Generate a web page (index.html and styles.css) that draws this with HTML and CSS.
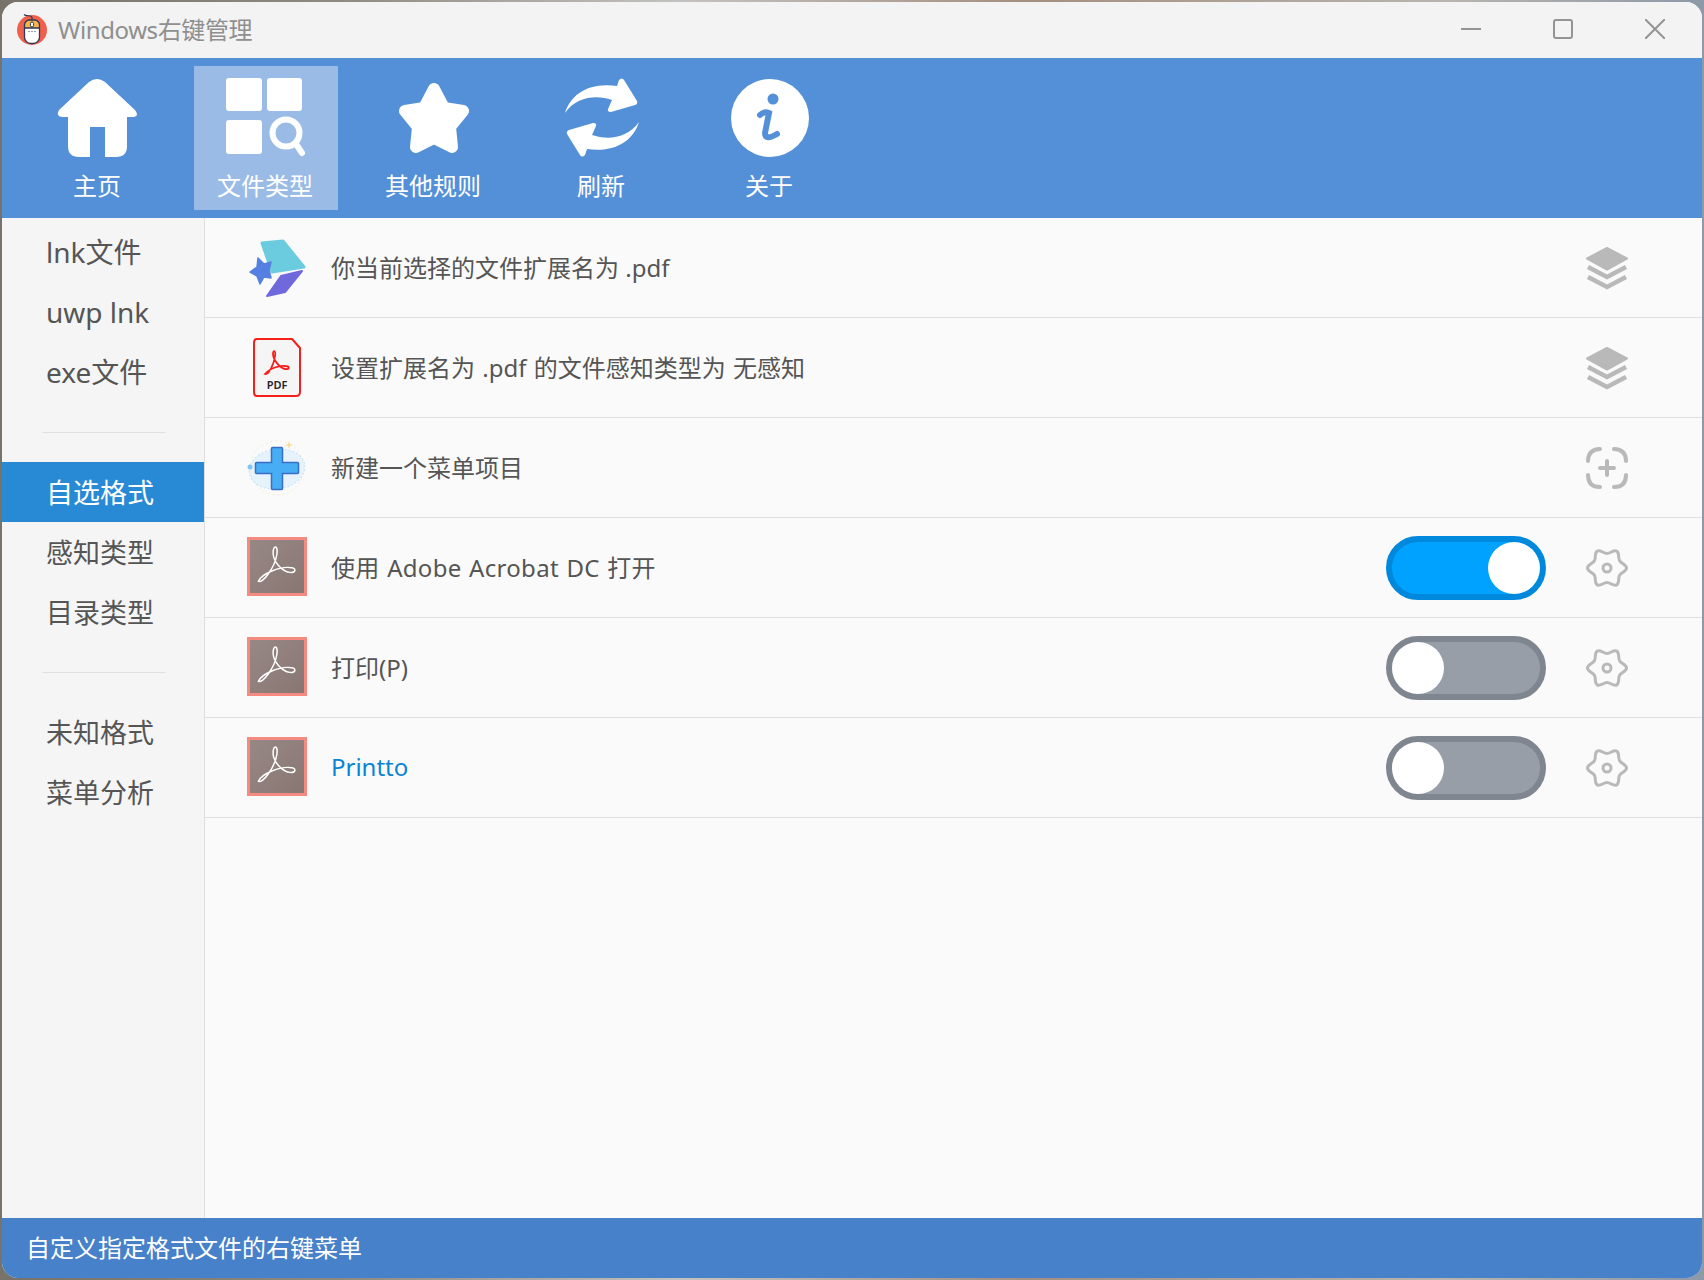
FILE: index.html
```html
<!DOCTYPE html>
<html lang="zh-CN">
<head>
  <meta charset="UTF-8">
  <meta name="viewport" content="width=device-width, initial-scale=1.0">
  <title>Windows右键管理</title>
  <link rel="stylesheet" href="styles.css">
</head>
<body>
  <!-- shared icons -->
  <svg class="sprite" aria-hidden="true">
    <symbol id="swirl" viewBox="0 0 54 54">
      <path d="M8 42C12 45 25 28 27 14C28 5 23 5 23 13C23 22 32 32 40 33C47 34 47 28 40 28C30 27 12 34 8 42Z"/>
    </symbol>
    <symbol id="layers" viewBox="0 0 44 44">
      <path class="solid" d="M22 2L42 12.500L22 23.500L2 12.500Z"/>
      <path class="chevrons" d="M3 21L22 31L41 21M3 31L22 41L41 31"/>
    </symbol>
    <symbol id="gear" viewBox="0 0 44 44">
      <path d="M22 7.500C25.500 7.500 28.720 3.360 31.750 5.110C34.780 6.860 32.810 11.720 34.560 14.750C36.310 17.780 41.500 18.500 41.500 22C41.500 25.500 36.310 26.220 34.560 29.250C32.810 32.280 34.780 37.140 31.750 38.890C28.720 40.640 25.500 36.500 22 36.500C18.500 36.500 15.280 40.640 12.250 38.890C9.220 37.140 11.190 32.280 9.440 29.250C7.690 26.220 2.500 25.500 2.500 22C2.500 18.500 7.690 17.780 9.440 14.750C11.190 11.720 9.220 6.860 12.250 5.110C15.280 3.360 18.500 7.500 22 7.500Z"/>
      <circle cx="22" cy="22" r="4"/>
    </symbol>
  </svg>

  <div class="window">
    <div class="titlebar">
      <svg class="app-icon" viewBox="0 0 32 32">
        <circle cx="16" cy="17" r="15" fill="#f0604d"/>
        <path d="M16 7V4.500C16 2 10 3.500 8 1.500" fill="none" stroke="#2b3a55" stroke-width="1.200"/>
        <path d="M8.500 15V12A5 5 0 0 1 13.500 7H18.500A5 5 0 0 1 23.500 12V15Z" fill="#f6b44a"/>
        <path d="M8.500 15H23.500V24A6.500 6.500 0 0 1 17 30.500H15A6.500 6.500 0 0 1 8.500 24Z" fill="#fff"/>
        <path d="M8.500 12A5 5 0 0 1 13.500 7H18.500A5 5 0 0 1 23.500 12V24A6.500 6.500 0 0 1 17 30.500H15A6.500 6.500 0 0 1 8.500 24ZM8.500 15H23.500" fill="none" stroke="#2b3a55" stroke-width="1.300"/>
        <rect x="14.500" y="9" width="3" height="5" rx="1.500" fill="#fff" stroke="#2b3a55"/>
        <path d="M12.500 18.500H13.500M15.500 18.500H16.500M18.500 18.500H19.500" stroke="#2b3a55"/>
      </svg>
      <div class="app-name">Windows右键管理</div>
      <div class="win-controls">
        <svg viewBox="0 0 20 20"><path d="M0 10H20"/></svg>
        <svg viewBox="0 0 20 20"><rect x="1" y="1" width="18" height="18" rx="2"/></svg>
        <svg viewBox="0 0 20 20"><path d="M0 0L20 20M20 0L0 20"/></svg>
      </div>
    </div>

    <div class="toolbar">
      <div class="tool">
        <svg viewBox="0 0 80 80"><path d="M32 4Q40 -2 48 4L78 32Q83 39 75 39H70V68Q70 79 59 79H48V49H33V79H22Q11 79 11 68V39H6Q-2 39 2 32Z"/></svg>
        <span>主页</span>
      </div>
      <div class="tool active">
        <svg viewBox="0 0 80 80">
          <rect x="1" y="0" width="36" height="33" rx="3"/>
          <rect x="42" y="0" width="35" height="33" rx="3"/>
          <rect x="1" y="42" width="36" height="34" rx="3"/>
          <circle class="lens" cx="61" cy="55" r="13.500"/>
          <path class="lens" d="M71 66L77 75"/>
        </svg>
        <span>文件类型</span>
      </div>
      <div class="tool">
        <svg viewBox="0 0 80 80"><polygon class="star" points="41,11 51,30 70,33 57,49 59,69 41,60 23,69 25,49 12,33 31,30"/></svg>
        <span>其他规则</span>
      </div>
      <div class="tool">
        <svg viewBox="0 0 80 80">
          <path d="M4 35C10 16 28 4 56 8L58 2Q61 -1 63 2L76 23Q77 26 74 27L50 34Q46 34 47 31L51 22C36 17 16 18 4 35Z"/>
          <path transform="rotate(180 41 39.500)" d="M4 35C10 16 28 4 56 8L58 2Q61 -1 63 2L76 23Q77 26 74 27L50 34Q46 34 47 31L51 22C36 17 16 18 4 35Z"/>
        </svg>
        <span>刷新</span>
      </div>
      <div class="tool">
        <svg viewBox="0 0 80 80">
          <circle cx="41" cy="40" r="39"/>
          <circle class="info-dot" cx="44" cy="21" r="5.500"/>
          <path class="info-stem" d="M31 37Q35 33 40 35L36 55Q36 63 48 56"/>
        </svg>
        <span>关于</span>
      </div>
    </div>

    <div class="content">
      <div class="sidebar">
        <div class="side-item">lnk文件</div>
        <div class="side-item">uwp lnk</div>
        <div class="side-item">exe文件</div>
        <div class="side-divider"></div>
        <div class="side-item zh selected">自选格式</div>
        <div class="side-item zh">感知类型</div>
        <div class="side-item zh">目录类型</div>
        <div class="side-divider"></div>
        <div class="side-item zh">未知格式</div>
        <div class="side-item zh">菜单分析</div>
      </div>

      <div class="list">
        <div class="row">
          <svg class="row-icon" viewBox="0 0 60 60">
            <polygon points="15,5 36,3 57,29 25,34" fill="#6bcbdf" stroke="#6bcbdf" stroke-width="3" stroke-linejoin="round"/>
            <polygon points="55,33 38,54 20,58 34,38" fill="#7069dc" stroke="#7069dc" stroke-width="2" stroke-linejoin="round"/>
            <polygon points="11,20 17,26 24,24 22,32 24,40 17,39 13,46 10,38 3,34 10,29" fill="#5580e2" stroke="#5580e2" stroke-width="1.500" stroke-linejoin="round"/>
          </svg>
          <div class="row-text">你当前选择的文件扩展名为 .pdf</div>
          <svg class="row-action"><use href="#layers"/></svg>
        </div>

        <div class="row">
          <svg class="row-icon" viewBox="0 0 60 60">
            <path class="pdf-page" d="M10 1H45L53 10V54Q53 58 49 58H10Q7 58 7 54V5Q7 1 10 1Z"/>
            <path class="pdf-swirl" d="M18 36C22 37 27 26 28 18C29 12 26 12 26 16C26 22 33 30 38 31C43 32 43 28 38 28C32 27 22 31 18 36Z"/>
            <text class="pdf-label" x="30" y="51" text-anchor="middle">PDF</text>
          </svg>
          <div class="row-text spaced">设置扩展名为 .pdf 的文件感知类型为 无感知</div>
          <svg class="row-action"><use href="#layers"/></svg>
        </div>

        <div class="row">
          <svg class="row-icon" viewBox="0 0 60 60">
            <ellipse cx="30" cy="31" rx="28" ry="20" transform="rotate(-8 30 31)" fill="#e6f2fc" stroke="#c3e2f8" stroke-dasharray="2 2"/>
            <circle cx="30" cy="30" r="27" fill="none" stroke="#f6ecd0" stroke-dasharray="2 3"/>
            <circle cx="3" cy="29" r="2.500" fill="#7cc7f5"/>
            <path d="M42 3L43 6L46 7L43 8L42 11L41 8L38 7L41 6Z" fill="#f6dd9a"/>
            <path class="plus" d="M24.500 10.500Q24.500 9.500 25.500 9.500H34.500Q35.500 9.500 35.500 10.500V24.500H50.500Q51.500 24.500 51.500 25.500V34.500Q51.500 35.500 50.500 35.500H35.500V50.500Q35.500 51.500 34.500 51.500H25.500Q24.500 51.500 24.500 50.500V35.500H9.500Q8.500 35.500 8.500 34.500V25.500Q8.500 24.500 9.500 24.500H24.500Z"/>
          </svg>
          <div class="row-text">新建一个菜单项目</div>
          <svg class="row-action thick" viewBox="0 0 44 44">
            <path d="M3 15Q3 3.500 15 3M29 3Q41 3.500 41 15M41 29Q41 41 29 41M15 41Q3 41 3 29M22 15V29M15 22H29"/>
          </svg>
        </div>

        <div class="row">
          <div class="tile"><svg><use href="#swirl"/></svg></div>
          <div class="row-text wide">使用 Adobe Acrobat DC 打开</div>
          <div class="toggle on"><div class="knob"></div></div>
          <svg class="row-action"><use href="#gear"/></svg>
        </div>

        <div class="row">
          <div class="tile"><svg><use href="#swirl"/></svg></div>
          <div class="row-text">打印(P)</div>
          <div class="toggle"><div class="knob"></div></div>
          <svg class="row-action"><use href="#gear"/></svg>
        </div>

        <div class="row">
          <div class="tile"><svg><use href="#swirl"/></svg></div>
          <div class="row-text link">Printto</div>
          <div class="toggle"><div class="knob"></div></div>
          <svg class="row-action"><use href="#gear"/></svg>
        </div>
      </div>
    </div>

    <div class="statusbar">自定义指定格式文件的右键菜单</div>
  </div>
</body>
</html>
```

FILE: styles.css
```css
* {
  margin: 0;
  padding: 0;
  box-sizing: border-box;
}

html,
body {
  height: 100%;
  overflow: hidden;
}

body {
  font-family: "Noto Sans", "Noto Sans CJK SC", sans-serif;
  background: linear-gradient(90deg, #77736a 0, #8f8a80 20%, #c4c2c0 40%, #a38f80 60%, #b8b4ae 85%, #8d99a8 100%);
  padding: 2px;
}

.sprite {
  display: none;
}

.window {
  width: 1700px;
  height: 1276px;
  border-radius: 16px;
  overflow: hidden;
  display: flex;
  flex-direction: column;
  background: #fafafa;
}

/* title bar */
.titlebar {
  height: 56px;
  flex: none;
  background: #f3f3f3;
  display: flex;
  align-items: center;
  padding-left: 14px;
}

.app-icon {
  width: 32px;
  height: 32px;
  margin-top: -2px;
}

.app-name {
  margin: -4px 0 0 10px;
  font-size: 24px;
  letter-spacing: -0.4px;
  color: #8f8f8f;
}

.win-controls {
  margin-left: auto;
  display: flex;
  gap: 72px;
  padding-right: 37px;
}

.win-controls svg {
  width: 20px;
  height: 20px;
  fill: none;
  stroke: #949494;
  stroke-width: 2;
  margin-top: -2px;
}

/* toolbar */
.toolbar {
  height: 160px;
  flex: none;
  background: #5490d8;
  display: flex;
  gap: 24px;
  padding: 8px 0 8px 24px;
}

.tool {
  width: 144px;
  display: flex;
  flex-direction: column;
  align-items: center;
  padding: 12px 2px 0 0;
  color: #fff;
  font-size: 24px;
}

.tool.active {
  background: #9abbe6;
}

.tool svg {
  width: 80px;
  height: 80px;
  fill: #fff;
  overflow: visible;
}

.tool span {
  margin-top: 13px;
  line-height: 30px;
}

.star {
  stroke: #fff;
  stroke-width: 12;
  stroke-linejoin: round;
}

.lens {
  fill: none;
  stroke: #fff;
  stroke-width: 6;
  stroke-linecap: round;
}

.info-dot {
  fill: #5490d8;
}

.info-stem {
  fill: none;
  stroke: #5490d8;
  stroke-width: 6;
  stroke-linecap: round;
}

/* main area */
.content {
  flex: 1;
  min-height: 0;
  display: flex;
}

.sidebar {
  width: 203px;
  flex: none;
  background: #f5f5f5;
  border-right: 1px solid #dedede;
  padding-top: 4px;
}

.side-item {
  height: 60px;
  line-height: 60px;
  padding-left: 44px;
  font-size: 28px;
  color: #555;
}

.side-item.zh {
  font-size: 27px;
  padding-top: 1px;
}

.side-item.selected {
  background: #288ad5;
  color: #fff;
}

.side-divider {
  height: 1px;
  width: 124px;
  margin: 30px 0 29px 40px;
  background: #e0e0e0;
}

.list {
  flex: 1;
}

.row {
  height: 100px;
  border-bottom: 1px solid #e0e0e0;
  display: flex;
  align-items: center;
  padding: 0 73px 0 42px;
}

.row-icon {
  width: 60px;
  height: 60px;
  flex: none;
  overflow: visible;
}

.row-text {
  margin: -2px 0 0 24px;
  font-size: 24px;
  color: #555;
}

.row-text.spaced {
  word-spacing: 1px;
}

.row-text.wide {
  word-spacing: 1px;
  letter-spacing: 0.3px;
}

.row-text.link {
  color: #0a84d6;
}

.row-action {
  width: 44px;
  height: 44px;
  flex: none;
  margin-left: auto;
  fill: none;
  stroke: #b9b9b9;
  stroke-width: 3;
  stroke-linecap: round;
}

.row-action.thick {
  stroke-width: 4;
}

.toggle + .row-action {
  margin-left: 39px;
}

.solid {
  fill: #b9b9b9;
  stroke: #b9b9b9;
  stroke-linejoin: round;
  stroke-width: 2;
}

.chevrons {
  stroke-width: 4.500;
  stroke-linecap: butt;
}

.pdf-page {
  fill: #f5f5f5;
  stroke: #f5201c;
  stroke-width: 2;
  stroke-linejoin: round;
}

.pdf-swirl {
  fill: none;
  stroke: #f5201c;
  stroke-width: 1.800;
}

.pdf-label {
  font-family: "Noto Sans", sans-serif;
  font-size: 11px;
  font-weight: 600;
  fill: #222;
}

.plus {
  fill: #47aef6;
  stroke: #3a6ec2;
  stroke-width: 1.500;
}

.tile {
  width: 60px;
  height: 59px;
  margin-top: -2px;
  flex: none;
  border: 3px solid #f48a80;
  background: linear-gradient(135deg, #988885, #887672);
}

.tile svg {
  display: block;
  width: 54px;
  height: 53px;
  fill: none;
  stroke: #fff;
  stroke-width: 1.500;
}

.toggle {
  width: 160px;
  height: 64px;
  margin-left: auto;
  flex: none;
  border: 6px solid #80868f;
  border-radius: 32px;
  background: #989ea8;
  display: flex;
}

.toggle.on {
  border-color: #0089dc;
  background: #00a2ff;
  justify-content: flex-end;
}

.knob {
  width: 52px;
  height: 52px;
  border-radius: 50%;
  background: #fff;
}

/* status bar */
.statusbar {
  height: 60px;
  flex: none;
  background: #4781c9;
  color: #fff;
  font-size: 24px;
  line-height: 60px;
  padding-left: 24px;
}
```
